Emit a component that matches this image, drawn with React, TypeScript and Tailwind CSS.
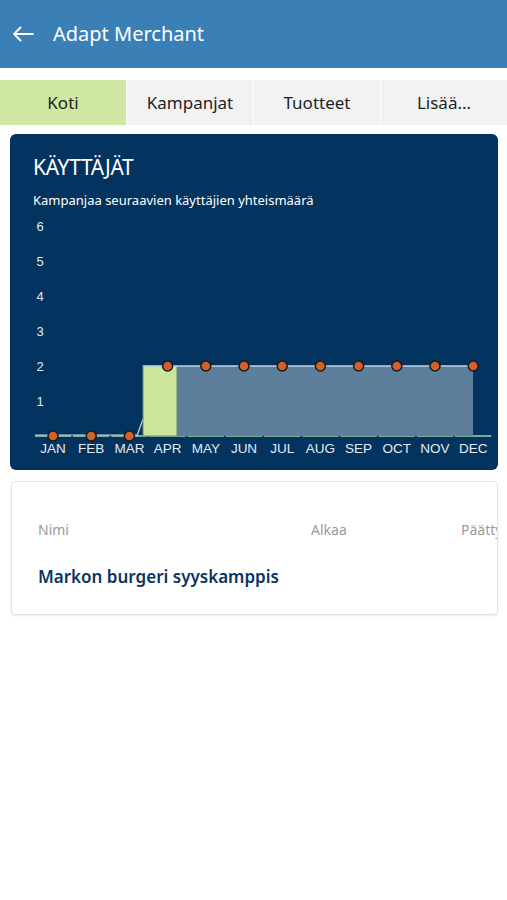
import React from "react";

const months = ["JAN", "FEB", "MAR", "APR", "MAY", "JUN", "JUL", "AUG", "SEP", "OCT", "NOV", "DEC"];
const values = [0, 0, 0, 2, 2, 2, 2, 2, 2, 2, 2, 2];

function Chart() {
  const x0 = 43;
  const step = 38.2;
  const base = 221;
  const unit = 35;
  const xs = months.map((_, i) => x0 + step * i);
  return (
    <svg width="488" height="245" viewBox="0 0 488 245" className="block">
      {[1, 2, 3, 4, 5, 6].map((v) => (
        <text
          key={v}
          x={30}
          y={base - unit * v + 5}
          textAnchor="middle"
          fontSize="13"
          fontFamily="Liberation Sans, Arial, sans-serif"
          fill="#e4eaf0"
        >
          {v}
        </text>
      ))}
      {xs.map((x, i) => (
        <line key={i} x1={i === 0 ? 25 : x - step / 2 + 1} x2={x + step / 2 - 1} y1={base} y2={base} stroke="#7fa89a" strokeWidth="2" />
      ))}
      <line x1={25} x2={127} y1={base - 1} y2={base - 1} stroke="#c9d6e0" strokeWidth="1.2" />
      <line x1={127} y1={base} x2={133} y2={base - 17} stroke="#c9d6e0" strokeWidth="1.2" />
      <rect x={133} y={base - 2 * unit} width={34} height={2 * unit} fill="#cde59c" stroke="#6f8f70" strokeWidth="1" />
      <rect x={167} y={base - 2 * unit} width={296} height={2 * unit} fill="#5e7f9b" />
      <line x1={133} x2={463} y1={base - 2 * unit} y2={base - 2 * unit} stroke="#c4d2de" strokeWidth="1.5" />
      {xs.map((x, i) => (
        <circle key={i} cx={x} cy={base - unit * values[i]} r={5} fill="#d2602a" stroke="#1b1b1b" strokeWidth="1.5" />
      ))}
      {months.map((m, i) => (
        <text
          key={m}
          x={xs[i]}
          y={base + 17}
          textAnchor="middle"
          fontSize="13.5"
          fontFamily="Liberation Sans, Arial, sans-serif"
          fill="#e4eaf0"
        >
          {m}
        </text>
      ))}
    </svg>
  );
}

export default function App() {
  const tabs = ["Koti", "Kampanjat", "Tuotteet", "Lisää..."];
  return (
    <div className="w-[507px] h-[900px] bg-white" style={{ fontFamily: '"Noto Sans", "Open Sans", sans-serif' }}>
      <div className="h-[68px] bg-[#3b7fb7] flex items-center px-[12px] text-white">
        <svg width="22" height="16" viewBox="0 0 22 16" className="mr-[19px]">
          <path d="M21 8H2M8.5 1.5 2 8l6.5 6.5" fill="none" stroke="white" strokeWidth="1.8" strokeLinecap="round" strokeLinejoin="round" />
        </svg>
        <span className="text-[20px] leading-none">Adapt Merchant</span>
      </div>
      <div className="h-[12px]" />
      <div className="flex h-[45px] gap-[1px]">
        {tabs.map((t, i) => (
          <div
            key={t}
            className={`flex-1 flex items-center justify-center text-[17px] text-[#1e1e1e] ${i === 0 ? "bg-[#cfe7a3]" : "bg-[#f2f2f2]"}`}
          >
            {t}
          </div>
        ))}
      </div>
      <div className="mt-[9px] mx-[10px] w-[488px] h-[336px] rounded-[6px] bg-[#03335f] text-white overflow-hidden">
        <div className="pl-[23px] pt-[19px] text-[21px] leading-[28px] tracking-[-0.3px]">KÄYTTÄJÄT</div>
        <div className="pl-[23px] pt-[10px] text-[13px] leading-[18px]">Kampanjaa seuraavien käyttäjien yhteismäärä</div>
        <div className="mt-[6px]">
          <Chart />
        </div>
      </div>
      <div className="mt-[11px] ml-[11px] w-[487px] h-[134px] rounded-[4px] border border-[#e3e3e3] shadow-[0_1px_2px_rgba(0,0,0,0.08)] overflow-hidden">
        <div className="relative h-[48px] mt-[36px] text-[14px] text-[#9a9a9a]">
          <span className="absolute left-[26px] top-[1px]">Nimi</span>
          <span className="absolute left-[299px] top-[1px]">Alkaa</span>
          <span className="absolute left-[449px] top-[1px] whitespace-nowrap">Päättyy</span>
        </div>
        <div className="pl-[26px] text-[17px] font-semibold text-[#0b355f] leading-[22px]">Markon burgeri syyskamppis</div>
      </div>
    </div>
  );
}
